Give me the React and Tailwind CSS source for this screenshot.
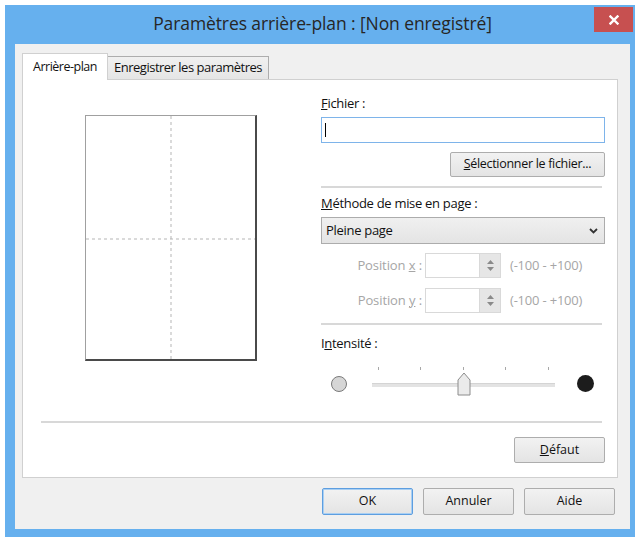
import React from "react";

function Btn({ children, className = "", def = false }) {
  return (
    <div
      className={
        "flex items-center justify-center border rounded-[2px] bg-gradient-to-b from-[#f2f2f2] to-[#e4e4e4] text-[12.5px] text-[#111] " +
        (def ? "border-[#5d9ee0] shadow-[inset_0_0_0_1px_#a9cff3] " : "border-[#adadad] ") +
        className
      }
    >
      {children}
    </div>
  );
}

function Separator({ className = "" }) {
  return <div className={"h-[2px] bg-[#d8d8d8] " + className} />;
}

function Spinner({ letter }) {
  return (
    <div className="flex items-center h-[25px] text-[13px] text-[#a6a6a6]">
      <div className="w-[104px] text-right pr-[3px] tracking-[-0.1px] whitespace-nowrap">
        Position <span className="underline">{letter}</span> :
      </div>
      <div className="flex w-[76px] h-[25px] border border-[#d9d9d9] bg-white">
        <div className="flex-1" />
        <div className="w-[21px] bg-[#e6e6e6] border-l border-[#d9d9d9] flex flex-col items-center justify-center gap-[3px]">
          <svg width="7" height="4" viewBox="0 0 7 4">
            <path d="M0 4 L3.5 0 L7 4 Z" fill="#8a8a8a" />
          </svg>
          <svg width="7" height="4" viewBox="0 0 7 4">
            <path d="M0 0 L3.5 4 L7 0 Z" fill="#8a8a8a" />
          </svg>
        </div>
      </div>
      <div className="ml-[9px] tracking-[-0.2px] whitespace-nowrap">(-100 - +100)</div>
    </div>
  );
}

function Preview() {
  return (
    <div className="relative w-[172px] h-[246px] bg-white border-l border-t border-[#a0a0a0] border-r-2 border-b-2 border-r-[#4a4a4a] border-b-[#4a4a4a]">
      <svg className="absolute inset-0" width="169" height="243">
        <line x1="85" y1="0" x2="85" y2="243" stroke="#b5b5b5" strokeWidth="1" strokeDasharray="3 3" />
        <line x1="0" y1="123" x2="169" y2="123" stroke="#b5b5b5" strokeWidth="1" strokeDasharray="3 3" />
      </svg>
    </div>
  );
}

function Slider() {
  const ticks = [6, 48, 91, 133, 176];
  return (
    <div className="flex items-start h-[30px] mt-[15px]">
      <div className="ml-[10px] mt-[10px] w-[16px] h-[16px] rounded-full bg-[#d6d6d6] border border-[#7a7a7a]" />
      <div className="relative ml-[25px] w-[183px] h-[30px]">
        {ticks.map((t) => (
          <div key={t} className="absolute top-[1px] w-[1px] h-[3px] bg-[#a8a8a8]" style={{ left: t }} />
        ))}
        <div className="absolute left-0 right-0 top-[17px] h-[4px] bg-[#e3e3e3] border-t border-[#d4d4d4]" />
        <svg className="absolute left-[85px] top-[6px]" width="14" height="24" viewBox="0 0 14 24">
          <path d="M1 23 L1 8 L7 1 L13 8 L13 23 Z" fill="#ebebeb" stroke="#8c8c8c" strokeWidth="1" />
        </svg>
      </div>
      <div className="ml-[22px] mt-[9px] w-[17px] h-[17px] rounded-full bg-[#1c1c1c]" />
    </div>
  );
}

export default function App() {
  return (
    <div className="w-[640px] h-[539px] bg-white pt-[5px] pl-[5px] font-['Open_Sans',sans-serif]">
      <div className="relative w-[630px] h-[532px] bg-[#66b0ee] flex flex-col pl-[10px] pr-[5px] pb-[8px]">
        <div className="h-[39px] flex items-center justify-center pb-[2px]">
          <span className="text-[17.5px] tracking-[-0.1px] text-[#262626] whitespace-nowrap">Paramètres arrière-plan : [Non enregistré]</span>
        </div>
        <div className="absolute top-[2px] right-[2px] w-[39px] h-[25px] bg-[#c75050] flex items-center justify-center">
          <svg width="10" height="10" viewBox="0 0 10 10">
            <path d="M1.5 1.5 L8.5 8.5 M8.5 1.5 L1.5 8.5" stroke="#ffffff" strokeWidth="2.4" strokeLinecap="square" />
          </svg>
        </div>

        <div className="flex-1 bg-[#f0f0f0] flex flex-col pl-[7px] pr-[12px] pt-[9px]">
          {/* tabs */}
          <div className="flex items-end h-[26px] relative z-10">
            <div className="w-[86px] h-[27px] -mb-[1px] bg-white border border-b-0 border-[#d0d0d0] flex items-center justify-center text-[12.5px] tracking-[-0.5px] text-[#111] whitespace-nowrap">
              Arrière-plan
            </div>
            <div className="w-[161px] h-[23px] bg-gradient-to-b from-[#f0f0f0] to-[#e5e5e5] border border-l-0 border-b-0 border-[#adadad] flex items-center justify-center text-[13px] tracking-[-0.5px] text-[#111] whitespace-nowrap">
              Enregistrer les paramètres
            </div>
          </div>

          {/* panel */}
          <div className="bg-white border border-[#d0d0d0] flex flex-col pb-[14px]">
            <div className="flex items-start">
              <div className="ml-[62px] mt-[35px]">
                <Preview />
              </div>
              <div className="ml-[64px] w-[284px] flex flex-col pt-[15px] text-[13px] text-[#111]">
                <div className="h-[16px] leading-[16px] tracking-[-0.3px]">
                  <span className="underline">F</span>ichier :
                </div>
                <div className="mt-[6px] h-[26px] border border-[#7eb4ea] bg-white flex items-center pl-[3px]">
                  <div className="w-[1px] h-[14px] bg-black" />
                </div>
                <div className="mt-[9px] flex justify-end">
                  <Btn className="w-[155px] h-[25px] tracking-[-0.3px]">
                    <span className="whitespace-nowrap">
                      <span className="underline">S</span>électionner le fichier...
                    </span>
                  </Btn>
                </div>
                <Separator className="mt-[9px] mr-[3px]" />
                <div className="mt-[7px] h-[16px] leading-[16px] tracking-[-0.3px]">
                  <span className="underline">M</span>éthode de mise en page :
                </div>
                <div className="mt-[6px] h-[27px] border border-[#acacac] bg-gradient-to-b from-[#f0f0f0] to-[#e4e4e4] flex items-center justify-between pl-[4px] pr-[6px]">
                  <span className="tracking-[-0.3px]">Pleine page</span>
                  <svg width="9" height="6" viewBox="0 0 9 6">
                    <path d="M1 1 L4.5 4.5 L8 1" fill="none" stroke="#333" strokeWidth="1.8" />
                  </svg>
                </div>
                <div className="mt-[9px]">
                  <Spinner letter="x" />
                </div>
                <div className="mt-[10px]">
                  <Spinner letter="y" />
                </div>
                <Separator className="mt-[10px] mr-[3px]" />
                <div className="mt-[10px] h-[16px] leading-[16px] tracking-[-0.3px]">
                  I<span className="underline">n</span>tensité :
                </div>
                <Slider />
              </div>
            </div>
            <Separator className="mt-[25px] ml-[18px] mr-[15px]" />
            <div className="mt-[14px] flex justify-end pr-[12px]">
              <Btn className="w-[91px] h-[26px]">
                <span>
                  <span className="underline">D</span>éfaut
                </span>
              </Btn>
            </div>
          </div>

          {/* dialog buttons */}
          <div className="mt-[10px] flex justify-end gap-[10px] pr-[3px]">
            <Btn def className="w-[91px] h-[27px]">OK</Btn>
            <Btn className="w-[91px] h-[27px]">Annuler</Btn>
            <Btn className="w-[91px] h-[27px]">Aide</Btn>
          </div>
        </div>
      </div>
    </div>
  );
}
